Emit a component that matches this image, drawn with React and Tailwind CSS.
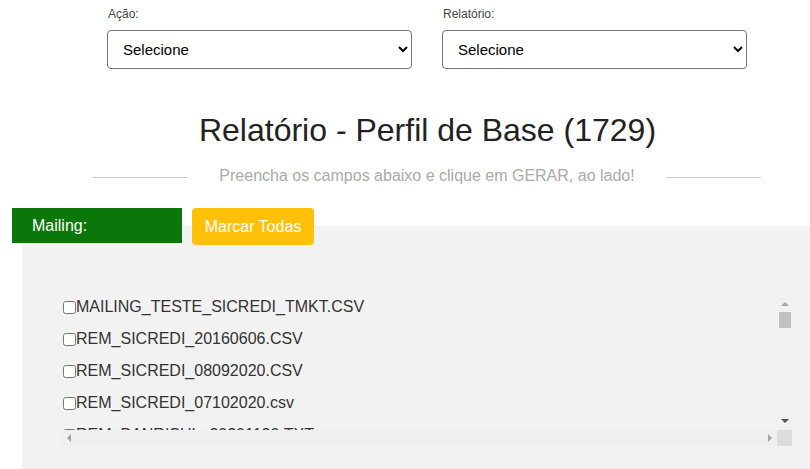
import { useState } from "react";

// tela "Relatório - Perfil de Base" — filtros no topo + lista de mailings com checkbox
const mailings = [
  "MAILING_TESTE_SICREDI_TMKT.CSV",
  "REM_SICREDI_20160606.CSV",
  "REM_SICREDI_08092020.CSV",
  "REM_SICREDI_07102020.csv",
  "REM_BANRISUL_20201120.TXT",
  "REM_BANRISUL_20201215.TXT",
  "REM_SICREDI_11012021.CSV",
  "REM_SICREDI_02022021.CSV",
];

export default function App() {
  const [checked, setChecked] = useState({});

  const marcarTodas = () => {
    const all = {};
    mailings.forEach((m) => (all[m] = true));
    setChecked(all);
  };

  const selectClass =
    "w-full h-[39px] pl-[11px] pr-2 text-[15px] text-black bg-white rounded-[4px] border border-[#767676]";

  return (
    <div className="min-h-[469px] overflow-hidden bg-white font-['Liberation_Sans',Arial,sans-serif]">
      <div className="flex gap-[30px] pt-[6px] pl-[107px]">
        <div className="w-[305px]">
          <label className="block mb-[7px] pl-[1px] text-[12px] leading-[17px] text-[#444]">Ação:</label>
          <select className={selectClass}>
            <option>Selecione</option>
          </select>
        </div>
        <div className="w-[305px]">
          <label className="block mb-[7px] pl-[1px] text-[12px] leading-[17px] text-[#444]">Relatório:</label>
          <select className={selectClass}>
            <option>Selecione</option>
          </select>
        </div>
      </div>

      <h1 className="mt-[42px] pl-[45px] text-center text-[32px] leading-[38px] text-[#222]">
        Relatório - Perfil de Base (1729)
      </h1>

      <div className="flex items-center mt-[16px] pl-[93px] w-[761px]">
        <div className="flex-1 h-px mt-[3px] bg-[#ccc]" />
        <p className="px-[31px] text-[16px] leading-[22px] text-[#aaa]">
          Preencha os campos abaixo e clique em GERAR, ao lado!
        </p>
        <div className="flex-1 h-px mt-[3px] bg-[#ccc]" />
      </div>

      <div className="relative z-10 flex gap-[10px] mt-[21px] pl-[12px]">
        <div className="w-[170px] h-[35px] pl-[20px] text-[16px] leading-[35px] text-white bg-[#0b770b]">
          Mailing:
        </div>
        <button
          onClick={marcarTodas}
          className="w-[122px] h-[37px] text-[16px] text-white bg-[#ffc107] rounded-[4px]"
        >
          Marcar Todas
        </button>
      </div>

      <div className="-mt-[19px] ml-[22px] h-[260px] pt-[71px] pl-[40px] pr-[18px] bg-[#f2f2f2]">
        <div className="flex flex-col h-[149px]">
          <div className="flex flex-1 min-h-0">
            <div className="flex-1 overflow-hidden pl-[1px]">
              {mailings.map((m) => (
                <label key={m} className="flex items-center mb-[12px] h-[20px] text-[16px] text-[#333] whitespace-nowrap">
                  <input
                    type="checkbox"
                    checked={!!checked[m]}
                    onChange={(e) => setChecked({ ...checked, [m]: e.target.checked })}
                    className="w-[13px] h-[13px]"
                  />
                  {m}
                </label>
              ))}
            </div>
            {/* barra vertical */}
            <div className="flex flex-col items-center w-[15px] bg-[#f1f1f1]">
              <div className="mt-[5px] w-0 h-0 border-x-[4px] border-x-transparent border-b-[4px] border-b-[#a3a3a3]" />
              <div className="mt-[6px] w-[12px] h-[16px] bg-[#c1c1c1]" />
              <div className="flex-1" />
              <div className="mb-[7px] w-0 h-0 border-x-[4px] border-x-transparent border-t-[4px] border-t-[#505050]" />
            </div>
          </div>
          {/* barra horizontal */}
          <div className="flex h-[16px]">
            <div className="flex flex-1 justify-between items-center px-[5px] bg-[#efefef]">
              <div className="w-0 h-0 border-y-[4px] border-y-transparent border-r-[4px] border-r-[#a3a3a3]" />
              <div className="w-0 h-0 border-y-[4px] border-y-transparent border-l-[4px] border-l-[#a3a3a3]" />
            </div>
            <div className="w-[15px] bg-[#dcdcdc]" />
          </div>
        </div>
      </div>
    </div>
  );
}
